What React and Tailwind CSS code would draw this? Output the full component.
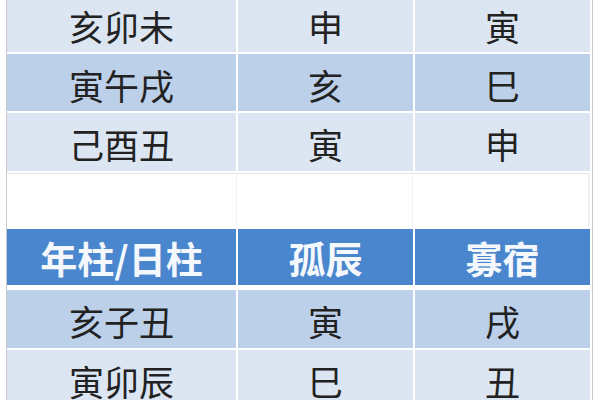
import React from 'react';

const top = [
  { cells: ['亥卯未', '申', '寅'], dark: false, h: 'h-[57px]' },
  { cells: ['寅午戌', '亥', '巳'], dark: true, h: 'h-[57px]' },
  { cells: ['己酉丑', '寅', '申'], dark: false, h: 'h-[58px]' },
];

const bottom = [
  { cells: ['亥子丑', '寅', '戌'], dark: true, h: 'h-[58px]' },
  { cells: ['寅卯辰', '巳', '丑'], dark: false, h: 'h-[57px]' },
];

function Row({ cells, dark, h }) {
  return (
    <div className={`grid grid-cols-[229px_175px_175px] gap-x-[2px] ${h}`}>
      {cells.map((c, i) => (
        <div
          key={i}
          className={`flex items-center justify-center pt-[3px] text-[35px] leading-none text-[#222] ${dark ? 'bg-[#bcd0ea]' : 'bg-[#dce6f2]'}`}
        >
          {c}
        </div>
      ))}
    </div>
  );
}

export default function App() {
  return (
    <div className="w-[600px] h-[400px] overflow-hidden bg-white font-['Noto_Sans_CJK_SC','Noto_Sans_CJK_TC',sans-serif]">
      <div className="ml-[6px] w-[587px] -mt-[5px] border-x border-[#c9c9c9] pr-[2px] flex flex-col gap-[2px]">
        {top.map((r, i) => (
          <Row key={i} {...r} />
        ))}

        {/* empty spacer row between the two tables */}
        <div className="grid grid-cols-[229px_175px_175px] gap-x-[1px] h-[54px] border-t border-[#e3e3e3] bg-[#edf1f5]">
          <div className="bg-white" />
          <div className="bg-white" />
          <div className="bg-white" />
        </div>

        <div className="grid grid-cols-[229px_175px_175px] gap-x-[2px] h-[56px] mb-[3px]">
          {['年柱/日柱', '孤辰', '寡宿'].map((t) => (
            <div
              key={t}
              className="flex items-center justify-center pt-[2px] bg-[#4a86cd] text-[37px] font-bold leading-none text-[#f4f8fc]"
            >
              {t}
            </div>
          ))}
        </div>

        {bottom.map((r, i) => (
          <Row key={i} {...r} />
        ))}
      </div>
    </div>
  );
}
